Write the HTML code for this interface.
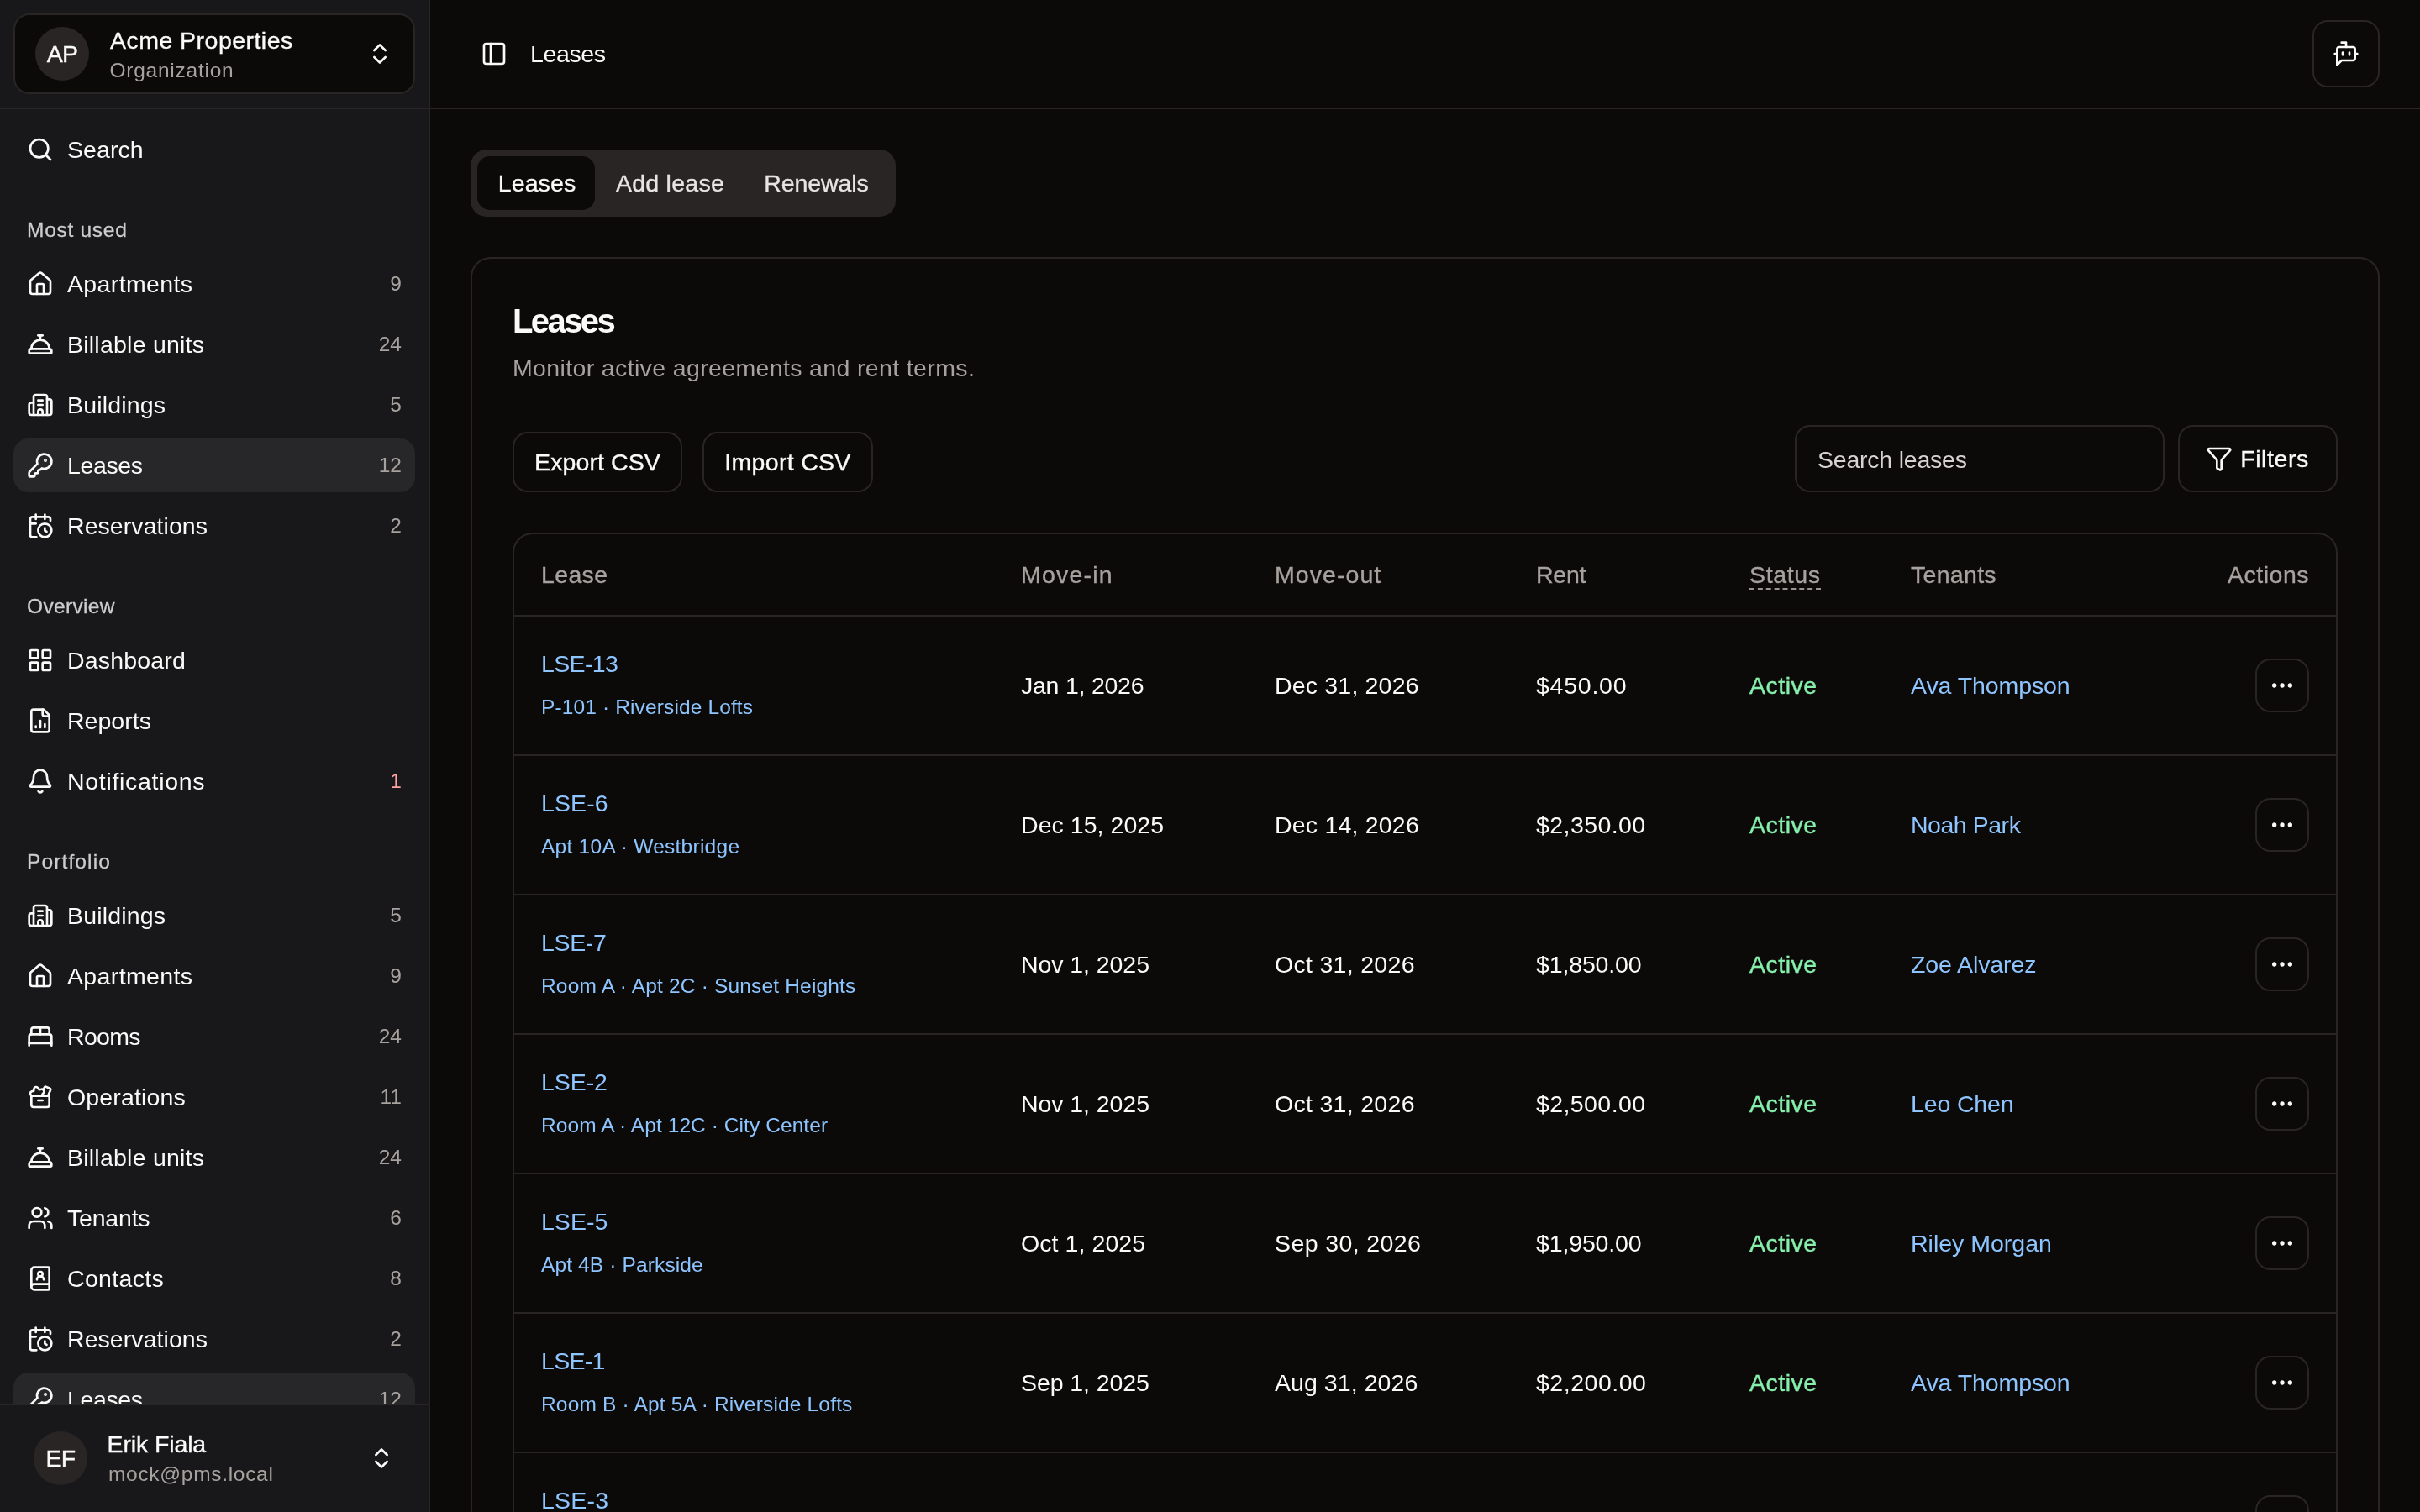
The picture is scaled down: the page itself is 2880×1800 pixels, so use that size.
<!DOCTYPE html>
<html lang="en">
<head>
<meta charset="utf-8">
<title>Leases</title>
<style>
*{box-sizing:border-box;margin:0;padding:0}
html,body{width:2880px;height:1800px;overflow:hidden;background:#0c0a09;}
body{font-family:"Liberation Sans", sans-serif;color:#fafaf9;position:relative;-webkit-font-smoothing:antialiased;will-change:transform}
.ic{display:block;flex:none}
span{white-space:pre;display:inline-block;vertical-align:top;line-height:inherit}
.t28{font-size:28.5px}
.t28m{font-size:28.5px;-webkit-text-stroke:0.35px currentColor}
.t24{font-size:24.5px}
.t24m{font-size:24.5px;-webkit-text-stroke:0.3px currentColor}
.t40b{font-size:40px;font-weight:700}
.abs{position:absolute}
.ln{position:absolute;white-space:pre;line-height:40px;height:40px}
/* sidebar */
#sb{position:absolute;left:0;top:0;width:512px;height:1800px;background:#18181b;border-right:2px solid #292524;overflow:hidden}
#sbh{position:absolute;left:0;top:0;width:510px;height:130px;border-bottom:2px solid #292524}
#org{position:absolute;left:16px;top:16px;width:478px;height:96px;border:2px solid #292524;border-radius:19px;background:#0c0a09}
.av{position:absolute;width:64px;height:64px;border-radius:50%;background:#292524;display:flex;align-items:center;justify-content:center}
#sbc{position:absolute;left:0;top:130px;width:510px;height:1541px;overflow:hidden}
.gl{position:absolute;left:32px;height:64px;line-height:64px;color:#cdcdce}
.ni{position:absolute;left:16px;width:478px;height:64px;border-radius:18px;display:flex;align-items:center;padding:0 16px;gap:16px}
.ni.on{background:#27272a}
.ni .lb{flex:1;line-height:40px;height:40px}
.ni .ct{color:#a8a29e;line-height:32px}
#sbf{position:absolute;left:0;top:1671px;width:510px;height:129px;border-top:2px solid #292524;background:#18181b}
/* main */
#hd{position:absolute;left:512px;top:0;width:2368px;height:130px;border-bottom:2px solid #292524}
#botb{position:absolute;left:2752px;top:24px;width:80px;height:80px;border:2px solid #292524;border-radius:18px;display:flex;align-items:center;justify-content:center}
#tabs{position:absolute;left:560px;top:178px;width:506px;height:80px;border-radius:19px;background:#292524}
.tab{position:absolute;top:8px;height:64px;border-radius:15px;line-height:64px;text-align:center;color:#e7e5e4}
.tab.on{background:#0c0a09;color:#fafaf9}
#card{position:absolute;left:560px;top:306px;width:2272px;height:1600px;border:2px solid #292524;border-radius:24px;background:#0c0a09}
.btn{position:absolute;border:2px solid #292524;border-radius:18px;display:flex;align-items:center;justify-content:center;background:#0c0a09}
#tbl{position:absolute;left:610px;top:634px;width:2172px;height:1300px;border:2px solid #292524;border-radius:24px;overflow:hidden}
.hr{position:absolute;left:0;width:2168px;height:2px;background:#292524}
.th{position:absolute;top:0;height:96px;line-height:96px;color:#a8a29e}
.row{position:absolute;left:0;width:2168px;height:164px}
.c{position:absolute;line-height:40px;height:40px;top:62px}
.lk{color:#8ec5ff}
.mb{position:absolute;left:2072px;top:50px;width:64px;height:64px;border:2px solid #292524;border-radius:18px;display:flex;align-items:center;justify-content:center}
</style>
</head>
<body>
<aside id="sb">
<div id="sbh"><div id="org">
<div class="av" style="left:24px;top:14px"><span class="t28m" style="letter-spacing:-0.80px;">AP</span></div>
<div class="ln" style="left:113px;top:9.5px"><span class="t28m" style="letter-spacing:0.47px;">Acme Properties</span></div>
<div class="ln" style="left:112.5px;top:50px;color:#a8a29e;line-height:32px;height:32px"><span class="t24" style="letter-spacing:0.75px;">Organization</span></div>
<svg class="ic" width="32" height="32" viewBox="0 0 24 24" fill="none" stroke="currentColor" stroke-width="2" stroke-linecap="round" stroke-linejoin="round" style="position:absolute;left:418px;top:30px"><path d="m7 15 5 5 5-5"/><path d="m7 9 5-5 5 5"/></svg>
</div></div>
<nav id="sbc">
<div class="ni" style="top:16px"><svg class="ic" width="32" height="32" viewBox="0 0 24 24" fill="none" stroke="currentColor" stroke-width="2" stroke-linecap="round" stroke-linejoin="round" style=""><circle cx="11" cy="11" r="8"/><path d="m21 21-4.34-4.34"/></svg><span class="lb"><span class="t28" style="letter-spacing:0.07px;">Search</span></span></div>
<div class="gl" style="top:112px"><span class="t24m" style="letter-spacing:0.72px;">Most used</span></div>
<div class="ni" style="top:176px"><svg class="ic" width="32" height="32" viewBox="0 0 24 24" fill="none" stroke="currentColor" stroke-width="2" stroke-linecap="round" stroke-linejoin="round" style=""><path d="M15 21v-8a1 1 0 0 0-1-1h-4a1 1 0 0 0-1 1v8"/><path d="M3 10a2 2 0 0 1 .709-1.528l7-5.999a2 2 0 0 1 2.582 0l7 5.999A2 2 0 0 1 21 10v9a2 2 0 0 1-2 2H5a2 2 0 0 1-2-2z"/></svg><span class="lb"><span class="t28" style="letter-spacing:0.36px;">Apartments</span></span><span class="ct t24" style="">9</span></div>
<div class="ni" style="top:248px"><svg class="ic" width="32" height="32" viewBox="0 0 24 24" fill="none" stroke="currentColor" stroke-width="2" stroke-linecap="round" stroke-linejoin="round" style=""><path d="M3 20a1 1 0 0 1-1-1v-1a2 2 0 0 1 2-2h16a2 2 0 0 1 2 2v1a1 1 0 0 1-1 1Z"/><path d="M20 16a8 8 0 1 0-16 0"/><path d="M12 4v4"/><path d="M10 4h4"/></svg><span class="lb"><span class="t28" style="letter-spacing:0.23px;">Billable units</span></span><span class="ct t24" style="">24</span></div>
<div class="ni" style="top:320px"><svg class="ic" width="32" height="32" viewBox="0 0 24 24" fill="none" stroke="currentColor" stroke-width="2" stroke-linecap="round" stroke-linejoin="round" style=""><path d="M10 12h4"/><path d="M10 8h4"/><path d="M14 21v-3a2 2 0 0 0-4 0v3"/><path d="M6 10H4a2 2 0 0 0-2 2v7a2 2 0 0 0 2 2h16a2 2 0 0 0 2-2V9a2 2 0 0 0-2-2h-2"/><path d="M6 21V5a2 2 0 0 1 2-2h8a2 2 0 0 1 2 2v16"/></svg><span class="lb"><span class="t28" style="letter-spacing:0.16px;">Buildings</span></span><span class="ct t24" style="">5</span></div>
<div class="ni on" style="top:392px"><svg class="ic" width="32" height="32" viewBox="0 0 24 24" fill="none" stroke="currentColor" stroke-width="2" stroke-linecap="round" stroke-linejoin="round" style=""><path d="M2.586 17.414A2 2 0 0 0 2 18.828V21a1 1 0 0 0 1 1h3a1 1 0 0 0 1-1v-1a1 1 0 0 1 1-1h1a1 1 0 0 0 1-1v-1a1 1 0 0 1 1-1h.172a2 2 0 0 0 1.414-.586l.814-.814a6.5 6.5 0 1 0-4-4z"/><circle cx="16.5" cy="7.5" r=".5" fill="currentColor"/></svg><span class="lb"><span class="t28" style="letter-spacing:-0.39px;">Leases</span></span><span class="ct t24" style="">12</span></div>
<div class="ni" style="top:464px"><svg class="ic" width="32" height="32" viewBox="0 0 24 24" fill="none" stroke="currentColor" stroke-width="2" stroke-linecap="round" stroke-linejoin="round" style=""><path d="M16 14v2.2l1.6 1"/><path d="M16 2v4"/><path d="M21 7.5V6a2 2 0 0 0-2-2H5a2 2 0 0 0-2 2v14a2 2 0 0 0 2 2h3.5"/><path d="M3 10h5"/><path d="M8 2v4"/><circle cx="16" cy="16" r="6"/></svg><span class="lb"><span class="t28" style="letter-spacing:0.06px;">Reservations</span></span><span class="ct t24" style="">2</span></div>
<div class="gl" style="top:560px"><span class="t24m" style="letter-spacing:0.33px;">Overview</span></div>
<div class="ni" style="top:624px"><svg class="ic" width="32" height="32" viewBox="0 0 24 24" fill="none" stroke="currentColor" stroke-width="2" stroke-linecap="round" stroke-linejoin="round" style=""><rect width="7" height="7" x="3" y="3" rx="1"/><rect width="7" height="7" x="14" y="3" rx="1"/><rect width="7" height="7" x="14" y="14" rx="1"/><rect width="7" height="7" x="3" y="14" rx="1"/></svg><span class="lb"><span class="t28" style="letter-spacing:0.18px;">Dashboard</span></span></div>
<div class="ni" style="top:696px"><svg class="ic" width="32" height="32" viewBox="0 0 24 24" fill="none" stroke="currentColor" stroke-width="2" stroke-linecap="round" stroke-linejoin="round" style=""><path d="M15 2H6a2 2 0 0 0-2 2v16a2 2 0 0 0 2 2h12a2 2 0 0 0 2-2V7Z"/><path d="M14 2v4a2 2 0 0 0 2 2h4"/><path d="M8 18v-1"/><path d="M12 18v-6"/><path d="M16 18v-3"/></svg><span class="lb"><span class="t28" style="letter-spacing:0.03px;">Reports</span></span></div>
<div class="ni" style="top:768px"><svg class="ic" width="32" height="32" viewBox="0 0 24 24" fill="none" stroke="currentColor" stroke-width="2" stroke-linecap="round" stroke-linejoin="round" style=""><path d="M10.268 21a2 2 0 0 0 3.464 0"/><path d="M3.262 15.326A1 1 0 0 0 4 17h16a1 1 0 0 0 .74-1.673C19.41 13.956 18 12.499 18 8A6 6 0 0 0 6 8c0 4.499-1.411 5.956-2.738 7.326"/></svg><span class="lb"><span class="t28" style="letter-spacing:0.69px;">Notifications</span></span><span class="ct t24" style="color:#ffa2a2">1</span></div>
<div class="gl" style="top:864px"><span class="t24m" style="letter-spacing:1.12px;">Portfolio</span></div>
<div class="ni" style="top:928px"><svg class="ic" width="32" height="32" viewBox="0 0 24 24" fill="none" stroke="currentColor" stroke-width="2" stroke-linecap="round" stroke-linejoin="round" style=""><path d="M10 12h4"/><path d="M10 8h4"/><path d="M14 21v-3a2 2 0 0 0-4 0v3"/><path d="M6 10H4a2 2 0 0 0-2 2v7a2 2 0 0 0 2 2h16a2 2 0 0 0 2-2V9a2 2 0 0 0-2-2h-2"/><path d="M6 21V5a2 2 0 0 1 2-2h8a2 2 0 0 1 2 2v16"/></svg><span class="lb"><span class="t28" style="letter-spacing:0.16px;">Buildings</span></span><span class="ct t24" style="">5</span></div>
<div class="ni" style="top:1000px"><svg class="ic" width="32" height="32" viewBox="0 0 24 24" fill="none" stroke="currentColor" stroke-width="2" stroke-linecap="round" stroke-linejoin="round" style=""><path d="M15 21v-8a1 1 0 0 0-1-1h-4a1 1 0 0 0-1 1v8"/><path d="M3 10a2 2 0 0 1 .709-1.528l7-5.999a2 2 0 0 1 2.582 0l7 5.999A2 2 0 0 1 21 10v9a2 2 0 0 1-2 2H5a2 2 0 0 1-2-2z"/></svg><span class="lb"><span class="t28" style="letter-spacing:0.36px;">Apartments</span></span><span class="ct t24" style="">9</span></div>
<div class="ni" style="top:1072px"><svg class="ic" width="32" height="32" viewBox="0 0 24 24" fill="none" stroke="currentColor" stroke-width="2" stroke-linecap="round" stroke-linejoin="round" style=""><path d="M2 20v-8a2 2 0 0 1 2-2h16a2 2 0 0 1 2 2v8"/><path d="M4 10V6a2 2 0 0 1 2-2h12a2 2 0 0 1 2 2v4"/><path d="M12 4v6"/><path d="M2 18h20"/></svg><span class="lb"><span class="t28" style="letter-spacing:-0.68px;">Rooms</span></span><span class="ct t24" style="">24</span></div>
<div class="ni" style="top:1144px"><svg class="ic" width="32" height="32" viewBox="0 0 24 24" fill="none" stroke="currentColor" stroke-width="2" stroke-linecap="round" stroke-linejoin="round" style=""><path d="M10 15h4"/><path d="m14.817 10.995-.971-1.45 1.034-1.232a2 2 0 0 0-2.025-3.238l-1.82.364L9.91 3.885a2 2 0 0 0-3.625.748L6.141 6.55l-1.725.426a2 2 0 0 0-.19 3.756l.657.27"/><path d="m18.822 10.995 2.26-5.38a1 1 0 0 0-.557-1.318L16.954 2.9a1 1 0 0 0-1.281.533l-.924 2.122"/><path d="M4 12.006A1 1 0 0 1 4.994 11H19a1 1 0 0 1 1 1v7a2 2 0 0 1-2 2H6a2 2 0 0 1-2-2z"/></svg><span class="lb"><span class="t28" style="letter-spacing:0.15px;">Operations</span></span><span class="ct t24" style="">11</span></div>
<div class="ni" style="top:1216px"><svg class="ic" width="32" height="32" viewBox="0 0 24 24" fill="none" stroke="currentColor" stroke-width="2" stroke-linecap="round" stroke-linejoin="round" style=""><path d="M3 20a1 1 0 0 1-1-1v-1a2 2 0 0 1 2-2h16a2 2 0 0 1 2 2v1a1 1 0 0 1-1 1Z"/><path d="M20 16a8 8 0 1 0-16 0"/><path d="M12 4v4"/><path d="M10 4h4"/></svg><span class="lb"><span class="t28" style="letter-spacing:0.23px;">Billable units</span></span><span class="ct t24" style="">24</span></div>
<div class="ni" style="top:1288px"><svg class="ic" width="32" height="32" viewBox="0 0 24 24" fill="none" stroke="currentColor" stroke-width="2" stroke-linecap="round" stroke-linejoin="round" style=""><path d="M16 21v-2a4 4 0 0 0-4-4H6a4 4 0 0 0-4 4v2"/><path d="M16 3.128a4 4 0 0 1 0 7.744"/><path d="M22 21v-2a4 4 0 0 0-3-3.87"/><circle cx="9" cy="7" r="4"/></svg><span class="lb"><span class="t28" style="letter-spacing:-0.20px;">Tenants</span></span><span class="ct t24" style="">6</span></div>
<div class="ni" style="top:1360px"><svg class="ic" width="32" height="32" viewBox="0 0 24 24" fill="none" stroke="currentColor" stroke-width="2" stroke-linecap="round" stroke-linejoin="round" style=""><path d="M15 13a3 3 0 1 0-6 0"/><path d="M4 19.5v-15A2.5 2.5 0 0 1 6.5 2H19a1 1 0 0 1 1 1v18a1 1 0 0 1-1 1H6.5a1 1 0 0 1 0-5H20"/><circle cx="12" cy="8" r="2"/></svg><span class="lb"><span class="t28" style="letter-spacing:0.34px;">Contacts</span></span><span class="ct t24" style="">8</span></div>
<div class="ni" style="top:1432px"><svg class="ic" width="32" height="32" viewBox="0 0 24 24" fill="none" stroke="currentColor" stroke-width="2" stroke-linecap="round" stroke-linejoin="round" style=""><path d="M16 14v2.2l1.6 1"/><path d="M16 2v4"/><path d="M21 7.5V6a2 2 0 0 0-2-2H5a2 2 0 0 0-2 2v14a2 2 0 0 0 2 2h3.5"/><path d="M3 10h5"/><path d="M8 2v4"/><circle cx="16" cy="16" r="6"/></svg><span class="lb"><span class="t28" style="letter-spacing:0.06px;">Reservations</span></span><span class="ct t24" style="">2</span></div>
<div class="ni on" style="top:1504px"><svg class="ic" width="32" height="32" viewBox="0 0 24 24" fill="none" stroke="currentColor" stroke-width="2" stroke-linecap="round" stroke-linejoin="round" style=""><path d="M2.586 17.414A2 2 0 0 0 2 18.828V21a1 1 0 0 0 1 1h3a1 1 0 0 0 1-1v-1a1 1 0 0 1 1-1h1a1 1 0 0 0 1-1v-1a1 1 0 0 1 1-1h.172a2 2 0 0 0 1.414-.586l.814-.814a6.5 6.5 0 1 0-4-4z"/><circle cx="16.5" cy="7.5" r=".5" fill="currentColor"/></svg><span class="lb"><span class="t28" style="letter-spacing:-0.39px;">Leases</span></span><span class="ct t24" style="">12</span></div>
</nav>
<div id="sbf">
<div class="av" style="left:40px;top:31px"><span class="t28m" style="letter-spacing:-0.80px;">EF</span></div>
<div class="ln" style="left:127.5px;top:26px"><span class="t28m" style="letter-spacing:-0.12px;">Erik Fiala</span></div>
<div class="ln" style="left:129px;top:66px;color:#a8a29e;line-height:32px;height:32px"><span class="t24" style="letter-spacing:0.69px;">mock@pms.local</span></div>
<svg class="ic" width="32" height="32" viewBox="0 0 24 24" fill="none" stroke="currentColor" stroke-width="2" stroke-linecap="round" stroke-linejoin="round" style="position:absolute;left:438px;top:47px"><path d="m7 15 5 5 5-5"/><path d="m7 9 5-5 5 5"/></svg>
</div>
</aside>
<header id="hd">
<svg class="ic" width="32" height="32" viewBox="0 0 24 24" fill="none" stroke="currentColor" stroke-width="2" stroke-linecap="round" stroke-linejoin="round" style="position:absolute;left:60px;top:48px"><rect width="18" height="18" x="3" y="3" rx="2"/><path d="M9 3v18"/></svg>
<div class="ln" style="left:119px;top:44px"><span class="t28" style="letter-spacing:-0.39px;">Leases</span></div>
</header>
<div id="botb"><svg class="ic" width="32" height="32" viewBox="0 0 24 24" fill="none" stroke="currentColor" stroke-width="2" stroke-linecap="round" stroke-linejoin="round" style=""><path d="M12 6V2H8"/><path d="m8 18-4 4V8a2 2 0 0 1 2-2h12a2 2 0 0 1 2 2v8a2 2 0 0 1-2 2Z"/><path d="M2 12h2"/><path d="M9 11v2"/><path d="M15 11v2"/><path d="M20 12h2"/></svg></div>
<div id="tabs">
<div class="tab on" style="left:8px;width:140px;padding-left:2px"><span class="t28m" style="letter-spacing:0.11px;">Leases</span></div>
<div class="tab" style="left:149px;width:177px"><span class="t28m" style="letter-spacing:0.26px;">Add lease</span></div>
<div class="tab" style="left:325px;width:173px"><span class="t28m" style="letter-spacing:-0.10px;">Renewals</span></div>
</div>
<section id="card"></section>
<h1 class="ln" style="left:610px;top:354px;line-height:56px;height:56px;font-weight:700"><span class="t40b" style="letter-spacing:-2.60px;">Leases</span></h1>
<p class="ln" style="left:610px;top:418px;color:#a8a29e"><span class="t28" style="letter-spacing:0.36px;">Monitor active agreements and rent terms.</span></p>
<div class="btn" style="left:610px;top:514px;width:202px;height:72px"><span class="t28m" style="letter-spacing:0.09px;">Export CSV</span></div>
<div class="btn" style="left:836px;top:514px;width:203px;height:72px"><span class="t28m" style="letter-spacing:0.31px;">Import CSV</span></div>
<div class="btn" style="left:2136px;top:506px;width:440px;height:80px;justify-content:flex-start;padding-left:25px;padding-top:3px;color:#d6d3d1"><span class="t28" style="letter-spacing:-0.22px;">Search leases</span></div>
<div class="btn" style="left:2592px;top:506px;width:190px;height:80px;gap:9px;padding-right:1px"><svg class="ic" width="32" height="32" viewBox="0 0 24 24" fill="none" stroke="currentColor" stroke-width="2" stroke-linecap="round" stroke-linejoin="round" style=""><path d="M10 20a1 1 0 0 0 .553.895l2 1A1 1 0 0 0 14 21v-7a2 2 0 0 1 .517-1.341L21.74 4.67A1 1 0 0 0 21 3H3a1 1 0 0 0-.742 1.67l7.225 7.989A2 2 0 0 1 10 14z"/></svg><span class="t28m" style="letter-spacing:0.56px;">Filters</span></div>
<div id="tbl">
<div class="th" style="left:32px"><span class="t28m" style="letter-spacing:0.35px;">Lease</span></div>
<div class="th" style="left:603px"><span class="t28m" style="letter-spacing:1.20px;">Move-in</span></div>
<div class="th" style="left:905px"><span class="t28m" style="letter-spacing:1.07px;">Move-out</span></div>
<div class="th" style="left:1216px"><span class="t28m" style="letter-spacing:-0.26px;">Rent</span></div>
<div class="th" style="left:1470px"><span class="t28m" style="letter-spacing:0.65px;">Status</span><i style="position:absolute;left:0;right:0;top:64px;height:0;border-top:2px dashed #999490"></i></div>
<div class="th" style="left:1662px"><span class="t28m" style="letter-spacing:0.30px;">Tenants</span></div>
<div class="th" style="right:32px"><span class="t28m" style="letter-spacing:0.50px;">Actions</span></div>
<div class="hr" style="top:96px"></div>
<div class="row" style="top:98px">
<div class="c lk" style="left:32px;top:36px"><span class="t28" style="letter-spacing:-0.64px;">LSE-13</span></div>
<div class="c lk" style="left:32px;top:92px;line-height:32px;height:32px"><span class="t24" style="letter-spacing:0.13px;">P-101 · Riverside Lofts</span></div>
<div class="c" style="left:603px"><span class="t28" style="letter-spacing:-0.24px;">Jan 1, 2026</span></div>
<div class="c" style="left:905px"><span class="t28" style="letter-spacing:0.18px;">Dec 31, 2026</span></div>
<div class="c" style="left:1216px"><span class="t28" style="letter-spacing:0.76px;">$450.00</span></div>
<div class="c" style="left:1470px;color:#86efac"><span class="t28m" style="letter-spacing:0.49px;">Active</span></div>
<div class="c lk" style="left:1662px"><span class="t28" style="letter-spacing:-0.09px;">Ava Thompson</span></div>
<div class="mb"><svg class="ic" width="32" height="32" viewBox="0 0 24 24" fill="none" stroke="currentColor" stroke-width="2" stroke-linecap="round" stroke-linejoin="round" style=""><circle cx="12" cy="12" r="1"/><circle cx="19" cy="12" r="1"/><circle cx="5" cy="12" r="1"/></svg></div>
</div>
<div class="hr" style="top:262px"></div>
<div class="row" style="top:264px">
<div class="c lk" style="left:32px;top:36px"><span class="t28" style="letter-spacing:0.09px;">LSE-6</span></div>
<div class="c lk" style="left:32px;top:92px;line-height:32px;height:32px"><span class="t24" style="letter-spacing:0.26px;">Apt 10A · Westbridge</span></div>
<div class="c" style="left:603px"><span class="t28" style="letter-spacing:0.05px;">Dec 15, 2025</span></div>
<div class="c" style="left:905px"><span class="t28" style="letter-spacing:0.20px;">Dec 14, 2026</span></div>
<div class="c" style="left:1216px"><span class="t28" style="letter-spacing:0.42px;">$2,350.00</span></div>
<div class="c" style="left:1470px;color:#86efac"><span class="t28m" style="letter-spacing:0.49px;">Active</span></div>
<div class="c lk" style="left:1662px"><span class="t28" style="letter-spacing:-0.47px;">Noah Park</span></div>
<div class="mb"><svg class="ic" width="32" height="32" viewBox="0 0 24 24" fill="none" stroke="currentColor" stroke-width="2" stroke-linecap="round" stroke-linejoin="round" style=""><circle cx="12" cy="12" r="1"/><circle cx="19" cy="12" r="1"/><circle cx="5" cy="12" r="1"/></svg></div>
</div>
<div class="hr" style="top:428px"></div>
<div class="row" style="top:430px">
<div class="c lk" style="left:32px;top:36px"><span class="t28" style="letter-spacing:-0.36px;">LSE-7</span></div>
<div class="c lk" style="left:32px;top:92px;line-height:32px;height:32px"><span class="t24" style="letter-spacing:0.17px;">Room A · Apt 2C · Sunset Heights</span></div>
<div class="c" style="left:603px"><span class="t28" style="letter-spacing:-0.07px;">Nov 1, 2025</span></div>
<div class="c" style="left:905px"><span class="t28" style="letter-spacing:0.30px;">Oct 31, 2026</span></div>
<div class="c" style="left:1216px"><span class="t28" style="letter-spacing:-0.14px;">$1,850.00</span></div>
<div class="c" style="left:1470px;color:#86efac"><span class="t28m" style="letter-spacing:0.49px;">Active</span></div>
<div class="c lk" style="left:1662px"><span class="t28" style="letter-spacing:-0.10px;">Zoe Alvarez</span></div>
<div class="mb"><svg class="ic" width="32" height="32" viewBox="0 0 24 24" fill="none" stroke="currentColor" stroke-width="2" stroke-linecap="round" stroke-linejoin="round" style=""><circle cx="12" cy="12" r="1"/><circle cx="19" cy="12" r="1"/><circle cx="5" cy="12" r="1"/></svg></div>
</div>
<div class="hr" style="top:594px"></div>
<div class="row" style="top:596px">
<div class="c lk" style="left:32px;top:36px"><span class="t28" style="letter-spacing:-0.07px;">LSE-2</span></div>
<div class="c lk" style="left:32px;top:92px;line-height:32px;height:32px"><span class="t24" style="letter-spacing:0.07px;">Room A · Apt 12C · City Center</span></div>
<div class="c" style="left:603px"><span class="t28" style="letter-spacing:-0.07px;">Nov 1, 2025</span></div>
<div class="c" style="left:905px"><span class="t28" style="letter-spacing:0.30px;">Oct 31, 2026</span></div>
<div class="c" style="left:1216px"><span class="t28" style="letter-spacing:0.41px;">$2,500.00</span></div>
<div class="c" style="left:1470px;color:#86efac"><span class="t28m" style="letter-spacing:0.49px;">Active</span></div>
<div class="c lk" style="left:1662px"><span class="t28" style="letter-spacing:-0.14px;">Leo Chen</span></div>
<div class="mb"><svg class="ic" width="32" height="32" viewBox="0 0 24 24" fill="none" stroke="currentColor" stroke-width="2" stroke-linecap="round" stroke-linejoin="round" style=""><circle cx="12" cy="12" r="1"/><circle cx="19" cy="12" r="1"/><circle cx="5" cy="12" r="1"/></svg></div>
</div>
<div class="hr" style="top:760px"></div>
<div class="row" style="top:762px">
<div class="c lk" style="left:32px;top:36px"><span class="t28" style="letter-spacing:0.01px;">LSE-5</span></div>
<div class="c lk" style="left:32px;top:92px;line-height:32px;height:32px"><span class="t24" style="letter-spacing:0.13px;">Apt 4B · Parkside</span></div>
<div class="c" style="left:603px"><span class="t28" style="letter-spacing:0.08px;">Oct 1, 2025</span></div>
<div class="c" style="left:905px"><span class="t28" style="letter-spacing:0.39px;">Sep 30, 2026</span></div>
<div class="c" style="left:1216px"><span class="t28" style="letter-spacing:-0.14px;">$1,950.00</span></div>
<div class="c" style="left:1470px;color:#86efac"><span class="t28m" style="letter-spacing:0.49px;">Active</span></div>
<div class="c lk" style="left:1662px"><span class="t28">Riley Morgan</span></div>
<div class="mb"><svg class="ic" width="32" height="32" viewBox="0 0 24 24" fill="none" stroke="currentColor" stroke-width="2" stroke-linecap="round" stroke-linejoin="round" style=""><circle cx="12" cy="12" r="1"/><circle cx="19" cy="12" r="1"/><circle cx="5" cy="12" r="1"/></svg></div>
</div>
<div class="hr" style="top:926px"></div>
<div class="row" style="top:928px">
<div class="c lk" style="left:32px;top:36px"><span class="t28" style="letter-spacing:-0.71px;">LSE-1</span></div>
<div class="c lk" style="left:32px;top:92px;line-height:32px;height:32px"><span class="t24" style="letter-spacing:0.17px;">Room B · Apt 5A · Riverside Lofts</span></div>
<div class="c" style="left:603px"><span class="t28" style="letter-spacing:-0.08px;">Sep 1, 2025</span></div>
<div class="c" style="left:905px"><span class="t28" style="letter-spacing:0.06px;">Aug 31, 2026</span></div>
<div class="c" style="left:1216px"><span class="t28" style="letter-spacing:0.52px;">$2,200.00</span></div>
<div class="c" style="left:1470px;color:#86efac"><span class="t28m" style="letter-spacing:0.49px;">Active</span></div>
<div class="c lk" style="left:1662px"><span class="t28" style="letter-spacing:-0.09px;">Ava Thompson</span></div>
<div class="mb"><svg class="ic" width="32" height="32" viewBox="0 0 24 24" fill="none" stroke="currentColor" stroke-width="2" stroke-linecap="round" stroke-linejoin="round" style=""><circle cx="12" cy="12" r="1"/><circle cx="19" cy="12" r="1"/><circle cx="5" cy="12" r="1"/></svg></div>
</div>
<div class="hr" style="top:1092px"></div>
<div class="row" style="top:1094px">
<div class="c lk" style="left:32px;top:36px"><span class="t28" style="letter-spacing:0.23px;">LSE-3</span></div>
<div class="mb"><svg class="ic" width="32" height="32" viewBox="0 0 24 24" fill="none" stroke="currentColor" stroke-width="2" stroke-linecap="round" stroke-linejoin="round" style=""><circle cx="12" cy="12" r="1"/><circle cx="19" cy="12" r="1"/><circle cx="5" cy="12" r="1"/></svg></div>
</div>
<div class="hr" style="top:1258px"></div>
</div>
<script>(function(){var r=window.innerWidth/2880;if(r>0&&Math.abs(r-1)>0.01){document.documentElement.style.zoom=r;}})();</script>
</body>
</html>
